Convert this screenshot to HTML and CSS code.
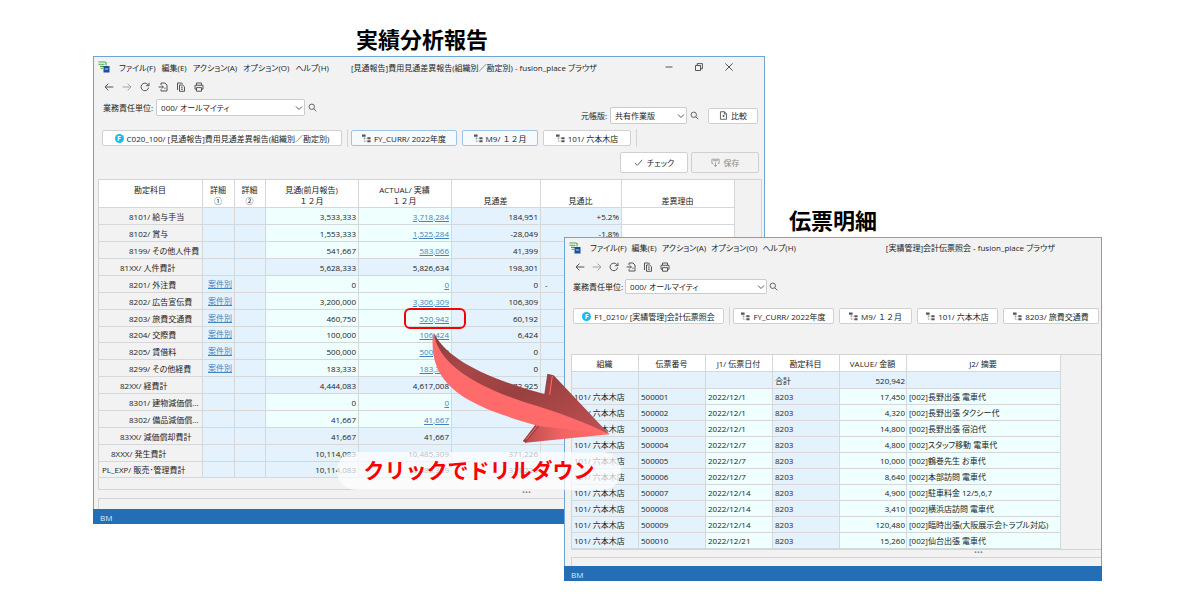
FILE: index.html
```html
<!DOCTYPE html>
<html lang="ja">
<head>
<meta charset="utf-8">
<title>fusion_place ドリルダウン</title>
<link rel="stylesheet" href="styles.css">
</head>
<body>
<svg class="defs" aria-hidden="true">
  <symbol id="i-app" viewBox="0 0 12 12"><path d="M1 1h7v6H1z" fill="#fff"/><path d="M.5 1h7M.5 3.2h6M2 5.4h4M8 1v3.5M2.5 7.3H5" stroke="#43a547" stroke-width="1.1" fill="none"/><path d="M5.5 5h6v6.5h-6z" fill="#1d4f9c"/><path d="M6.8 8h3.4" stroke="#9ec3f0" stroke-width="1.2"/></symbol>
  <symbol id="i-back" viewBox="0 0 10 10"><path d="M9.3 5H1M4.4 1.6 1 5l3.4 3.4"/></symbol>
  <symbol id="i-next" viewBox="0 0 10 10"><path d="M.7 5H9M5.6 1.6 9 5 5.6 8.4"/></symbol>
  <symbol id="i-reload" viewBox="0 0 10 10"><path d="M8.6 5.6A3.8 3.8 0 1 1 7.7 2.4L8.8 3.5M9 .8v2.9H6.1"/></symbol>
  <symbol id="i-import" viewBox="0 0 10 10"><path d="M3 3V1h4l2 2v6H3V7.3M.5 5h4.8M3.8 3.4 5.4 5 3.8 6.6M6.3 6.2h1.3"/></symbol>
  <symbol id="i-copy" viewBox="0 0 10 10"><path d="M1.5 8V1h4.2l1 1M3.5 3h3.2l1.8 1.8V9.3h-5zM5 5.2h1.8M5 7.2h2"/></symbol>
  <symbol id="i-print" viewBox="0 0 10 10"><path d="M2.5 3.2V1h5v2.2M2.5 7.2H1V3.3h8v3.9H7.5M2.5 5.6h5v3.6h-5z"/></symbol>
  <symbol id="i-search" viewBox="0 0 10 10"><path d="M7.2 4.2a3 3 0 1 1-6 0 3 3 0 0 1 6 0zM6.4 6.4 9.2 9.2"/></symbol>
  <symbol id="i-down" viewBox="0 0 8 8"><path d="M1 2.5 4 5.5l3-3"/></symbol>
  <symbol id="i-tree" viewBox="0 0 10 10"><path d="M0 .5h4V3H0zM6 3.6h3.5v2.2H6zM6 7h3.5v2.3H6z" fill="#555" stroke="none"/><path d="M2.5 3v5H6M2.5 4.7H6" stroke="#888" stroke-dasharray="1 .6"/></symbol>
  <symbol id="i-doc" viewBox="0 0 10 10"><path d="M1.6.8h4.6l2.2 2.3v6.1H1.6zM3.8 5.5h2.4M5 4.3v2.4M6 1v2.4h2.2"/></symbol>
  <symbol id="i-check" viewBox="0 0 10 10"><path d="M1 5.6 3.7 8.2 9.2 2"/></symbol>
  <symbol id="i-save" viewBox="0 0 10 10"><path d="M2.4 6H1V1.4h8V6H7.6M2.5 3h5M5 9.4V4.8M3.2 7.6 5 9.4l1.8-1.8" /></symbol>
</svg>

<main class="stage">
  <h2 class="caption caption-report">実績分析報告</h2>
  <h2 class="caption caption-slip">伝票明細</h2>

  <section class="window report" aria-label="実績分析報告">
    <header class="titlebar">
      <svg class="app-icon"><use href="#i-app"/></svg>
      <nav class="menu"><button>ファイル(F)</button><button>編集(E)</button><button>アクション(A)</button><button>オプション(O)</button><button>ヘルプ(H)</button></nav>
      <span class="title">[見通報告]費用見通差異報告(組織別／勘定別) - fusion_place ブラウザ</span>
      <div class="controls">
        <button aria-label="最小化"><svg viewBox="0 0 10 10"><path d="M1.5 5h7"/></svg></button>
        <button aria-label="元に戻す"><svg viewBox="0 0 10 10"><path d="M1.5 3.5h5v5h-5zM3.2 3V1.6h5.2v5.2H7"/></svg></button>
        <button aria-label="閉じる"><svg viewBox="0 0 10 10"><path d="M1.4 1.4l7.2 7.2M8.6 1.4 1.4 8.6"/></svg></button>
      </div>
    </header>
    <div class="toolbar">
      <button aria-label="戻る"><svg><use href="#i-back"/></svg></button>
      <button aria-label="進む" class="dim"><svg><use href="#i-next"/></svg></button>
      <button aria-label="更新"><svg><use href="#i-reload"/></svg></button>
      <button aria-label="取込"><svg><use href="#i-import"/></svg></button>
      <button aria-label="複写"><svg><use href="#i-copy"/></svg></button>
      <button aria-label="印刷"><svg><use href="#i-print"/></svg></button>
    </div>
    <div class="filters">
      <div class="field">
        <label for="unit1">業務責任単位:</label>
        <span class="select unit"><select id="unit1"><option>000/ オールマイティ</option></select><svg><use href="#i-down"/></svg></span>
        <button class="search" aria-label="検索"><svg><use href="#i-search"/></svg></button>
      </div>
      <div class="field ledger">
        <label for="ledger">元帳版:</label>
        <span class="select"><select id="ledger"><option>共有作業版</option></select><svg><use href="#i-down"/></svg></span>
        <button class="search" aria-label="検索"><svg><use href="#i-search"/></svg></button>
        <button class="btn compare"><svg><use href="#i-doc"/></svg>比較</button>
      </div>
    </div>
    <div class="chips">
      <button class="btn form"><i class="badge">F</i>C020_100/ [見通報告]費用見通差異報告(組織別／勘定別)</button>
      <span class="sep"></span>
      <button class="btn active year"><svg><use href="#i-tree"/></svg>FY_CURR/ 2022年度</button>
      <button class="btn active month"><svg><use href="#i-tree"/></svg>M9/ １２月</button>
      <button class="btn store"><svg><use href="#i-tree"/></svg>101/ 六本木店</button>
      <span class="sep"></span>
    </div>
    <div class="actions">
      <button class="btn"><svg><use href="#i-check"/></svg>チェック</button>
      <button class="btn" disabled><svg><use href="#i-save"/></svg>保存</button>
    </div>
    <div class="sheet">
      <table>
        <colgroup><col class="c-account"><col class="c-d1"><col class="c-d2"><col class="c-plan"><col class="c-plan"><col class="c-diff"><col class="c-ratio"><col class="c-reason"></colgroup>
        <thead><tr><th class="top">勘定科目</th><th>詳細<br>①</th><th>詳細<br>②</th><th>見通(前月報告)<br>１２月</th><th>ACTUAL/ 実績<br>１２月</th><th>見通差</th><th>見通比</th><th>差異理由</th></tr></thead>
        <tbody>
          <tr><th class="l3">8101/ 給与手当</th><td></td><td></td><td class="in">3,533,333</td><td class="in"><a href="#">3,718,284</a></td><td>184,951</td><td>+5.2%</td><td class="note"></td></tr>
          <tr><th class="l3">8102/ 賞与</th><td></td><td></td><td class="in">1,553,333</td><td class="in"><a href="#">1,525,284</a></td><td>-28,049</td><td>-1.8%</td><td class="note"></td></tr>
          <tr><th class="l3">8199/ その他人件費</th><td></td><td></td><td class="in">541,667</td><td class="in"><a href="#">583,066</a></td><td>41,399</td><td></td><td class="note"></td></tr>
          <tr><th class="l2">81XX/ 人件費計</th><td></td><td></td><td>5,628,333</td><td>5,826,634</td><td>198,301</td><td></td><td class="note"></td></tr>
          <tr><th class="l3">8201/ 外注費</th><td class="detail"><a href="#">案件別</a></td><td></td><td class="in">0</td><td class="in"><a href="#">0</a></td><td>0</td><td class="none">-</td><td class="note"></td></tr>
          <tr><th class="l3">8202/ 広告宣伝費</th><td class="detail"><a href="#">案件別</a></td><td></td><td class="in">3,200,000</td><td class="in"><a href="#">3,306,309</a></td><td>106,309</td><td></td><td class="note"></td></tr>
          <tr><th class="l3">8203/ 旅費交通費</th><td class="detail"><a href="#">案件別</a></td><td></td><td class="in">460,750</td><td class="in"><a href="#">520,942</a></td><td>60,192</td><td></td><td class="note"></td></tr>
          <tr><th class="l3">8204/ 交際費</th><td class="detail"><a href="#">案件別</a></td><td></td><td class="in">100,000</td><td class="in"><a href="#">106,424</a></td><td>6,424</td><td></td><td class="note"></td></tr>
          <tr><th class="l3">8205/ 賃借料</th><td class="detail"><a href="#">案件別</a></td><td></td><td class="in">500,000</td><td class="in"><a href="#">500,000</a></td><td>0</td><td></td><td class="note"></td></tr>
          <tr><th class="l3">8299/ その他経費</th><td class="detail"><a href="#">案件別</a></td><td></td><td class="in">183,333</td><td class="in"><a href="#">183,333</a></td><td>0</td><td></td><td class="note"></td></tr>
          <tr><th class="l2">82XX/ 経費計</th><td></td><td></td><td>4,444,083</td><td>4,617,008</td><td>172,925</td><td></td><td class="note"></td></tr>
          <tr><th class="l3">8301/ 建物減価償...</th><td></td><td></td><td class="in">0</td><td class="in"><a href="#">0</a></td><td></td><td></td><td class="note"></td></tr>
          <tr><th class="l3">8302/ 備品減価償...</th><td></td><td></td><td class="in">41,667</td><td class="in"><a href="#">41,667</a></td><td></td><td></td><td class="note"></td></tr>
          <tr><th class="l2">83XX/ 減価償却費計</th><td></td><td></td><td>41,667</td><td>41,667</td><td></td><td></td><td class="note"></td></tr>
          <tr><th class="l1">8XXX/ 発生費計</th><td></td><td></td><td>10,114,083</td><td>10,485,309</td><td>371,226</td><td></td><td class="note"></td></tr>
          <tr><th>PL_EXP/ 販売･管理費計</th><td></td><td></td><td>10,114,083</td><td>10,485,309</td><td>371,226</td><td></td><td class="note"></td></tr>
        </tbody>
      </table>
    </div>
    <div class="splitter">•••</div>
    <div class="pane"></div>
    <footer class="status">BM</footer>
  </section>

  <section class="window slip" aria-label="伝票明細">
    <header class="titlebar">
      <svg class="app-icon"><use href="#i-app"/></svg>
      <nav class="menu"><button>ファイル(F)</button><button>編集(E)</button><button>アクション(A)</button><button>オプション(O)</button><button>ヘルプ(H)</button></nav>
      <span class="title">[実績管理]会計伝票照会 - fusion_place ブラウザ</span>
    </header>
    <div class="toolbar">
      <button aria-label="戻る"><svg><use href="#i-back"/></svg></button>
      <button aria-label="進む" class="dim"><svg><use href="#i-next"/></svg></button>
      <button aria-label="更新"><svg><use href="#i-reload"/></svg></button>
      <button aria-label="取込"><svg><use href="#i-import"/></svg></button>
      <button aria-label="複写"><svg><use href="#i-copy"/></svg></button>
      <button aria-label="印刷"><svg><use href="#i-print"/></svg></button>
    </div>
    <div class="filters">
      <div class="field">
        <label for="unit2">業務責任単位:</label>
        <span class="select unit"><select id="unit2"><option>000/ オールマイティ</option></select><svg><use href="#i-down"/></svg></span>
        <button class="search" aria-label="検索"><svg><use href="#i-search"/></svg></button>
      </div>
    </div>
    <div class="chips">
      <button class="btn form"><i class="badge">F</i>F1_0210/ [実績管理]会計伝票照会</button>
      <span class="sep"></span>
      <button class="btn year"><svg><use href="#i-tree"/></svg>FY_CURR/ 2022年度</button>
      <button class="btn month"><svg><use href="#i-tree"/></svg>M9/ １２月</button>
      <button class="btn store"><svg><use href="#i-tree"/></svg>101/ 六本木店</button>
      <button class="btn account"><svg><use href="#i-tree"/></svg>8203/ 旅費交通費</button>
    </div>
    <div class="sheet">
      <table>
        <colgroup><col class="c-slip"><col class="c-slip"><col class="c-slip"><col class="c-slip"><col class="c-slip"><col class="c-memo"></colgroup>
        <thead><tr><th>組織</th><th>伝票番号</th><th>J1/ 伝票日付</th><th>勘定科目</th><th>VALUE/ 金額</th><th>J2/ 摘要</th></tr></thead>
        <tbody>
          <tr class="total"><td></td><td></td><td></td><td>合計</td><td class="num">520,942</td><td></td></tr>
          <tr><td>101/ 六本木店</td><td>500001</td><td class="in">2022/12/1</td><td>8203</td><td class="in num">17,450</td><td class="in">[002]長野出張 電車代</td></tr>
          <tr><td>101/ 六本木店</td><td>500002</td><td class="in">2022/12/1</td><td>8203</td><td class="in num">4,320</td><td class="in">[002]長野出張 タクシー代</td></tr>
          <tr><td>101/ 六本木店</td><td>500003</td><td class="in">2022/12/1</td><td>8203</td><td class="in num">14,800</td><td class="in">[002]長野出張 宿泊代</td></tr>
          <tr><td>101/ 六本木店</td><td>500004</td><td class="in">2022/12/7</td><td>8203</td><td class="in num">4,800</td><td class="in">[002]スタッフ移動 電車代</td></tr>
          <tr><td>101/ 六本木店</td><td>500005</td><td class="in">2022/12/7</td><td>8203</td><td class="in num">10,000</td><td class="in">[002]鶴巻先生 お車代</td></tr>
          <tr><td>101/ 六本木店</td><td>500006</td><td class="in">2022/12/7</td><td>8203</td><td class="in num">8,640</td><td class="in">[002]本部訪問 電車代</td></tr>
          <tr><td>101/ 六本木店</td><td>500007</td><td class="in">2022/12/14</td><td>8203</td><td class="in num">4,900</td><td class="in">[002]駐車料金 12/5,6,7</td></tr>
          <tr><td>101/ 六本木店</td><td>500008</td><td class="in">2022/12/14</td><td>8203</td><td class="in num">3,410</td><td class="in">[002]横浜店訪問 電車代</td></tr>
          <tr><td>101/ 六本木店</td><td>500009</td><td class="in">2022/12/14</td><td>8203</td><td class="in num">120,480</td><td class="in">[002]臨時出張(大阪展示会トラブル対応)</td></tr>
          <tr><td>101/ 六本木店</td><td>500010</td><td class="in">2022/12/21</td><td>8203</td><td class="in num">15,260</td><td class="in">[002]仙台出張 電車代</td></tr>
        </tbody>
      </table>
    </div>
    <div class="splitter">•••</div>
    <div class="pane"></div>
    <footer class="status">BM</footer>
  </section>

  <div class="highlight"></div>
  <svg class="arrow" viewBox="0 0 585 375" aria-hidden="true">
    <defs>
      <linearGradient id="shade" x1="0" y1="0" x2="1" y2="1"><stop offset="0" stop-color="#8f3a3a"/><stop offset=".25" stop-color="#a84747"/><stop offset=".55" stop-color="#9a4040"/><stop offset="1" stop-color="#c25252"/></linearGradient>
      <linearGradient id="head" x1="0" y1="0" x2="1" y2="0"><stop offset="0" stop-color="#b84d4d"/><stop offset=".45" stop-color="#f06464"/><stop offset="1" stop-color="#ff6b6b"/></linearGradient>
    </defs>
    <path d="M294 348 338 300 365 296 553 328 302 353z" fill="url(#head)"/>
    <path d="M294 348 331 299 343 303 302 353z" fill="#9a4141"/>
    <path d="M303 344 337 302" stroke="#ff7474" stroke-width="3"/>
    <path d="M27 24C60 90 150 150 358 207L367 146 386 151 553 328 300 260C120 200 30 130 27 24z" fill="url(#shade)"/>
    <path d="M26 24C40 110 130 175 300 232 400 262 480 292 553 328L340 303C260 280 190 258 130 224 60 184 18 130 23 40z" fill="#ff6b6b"/>
    <path d="M382 152 374 209" stroke="#ff7070" stroke-width="3"/>
  </svg>
  <p class="callout">クリックでドリルダウン</p>
</main>
</body>
</html>
```
FILE: styles.css
```css
* { box-sizing: border-box; }

body {
  margin: 0;
  background: #fff;
  color: #222;
  font: 8px/11px "Open Sans", "Noto Sans CJK JP", sans-serif;
}

button, select {
  margin: 0;
  padding: 0;
  border: 0;
  background: none;
  color: inherit;
  font: inherit;
  white-space: nowrap;
}

svg { fill: none; stroke: #555; stroke-width: 1; }
.defs { position: absolute; width: 0; height: 0; }

.stage {
  position: relative;
  max-width: 1200px;
  min-height: 600px;
  margin: 0 auto;
}

.caption {
  position: absolute;
  margin: 0;
  color: #000;
  font: 700 22px/32px "Noto Sans CJK JP", sans-serif;
}
.caption-report { left: 356px; top: 22px; }
.caption-slip { left: 789px; top: 203px; }

/* Windows */
.window {
  position: absolute;
  display: flex;
  flex-direction: column;
  border: 1px solid #6fa4d4;
  border-bottom: 0;
  background: #f2f2f2;
}
.report { left: 93px; top: 56px; width: 672px; }
.slip { left: 564px; top: 237px; width: 538px; }

.titlebar {
  display: flex;
  align-items: center;
  height: 20px;
  padding: 0 30px 0 4px;
  font-feature-settings: "palt";
}
.app-icon { width: 12px; height: 12px; stroke: none; margin-right: 9px; }
.menu { display: flex; gap: 6px; }
.title { margin-left: 22px; }
.controls { display: flex; gap: 20px; margin-left: auto; }
.controls svg { display: block; width: 10px; height: 10px; }

.toolbar {
  display: flex;
  align-items: center;
  gap: 8px;
  height: 20px;
  padding-left: 10px;
}
.toolbar svg { display: block; width: 10px; height: 10px; }
.toolbar .dim { opacity: 0.5; }

.filters {
  display: flex;
  justify-content: space-between;
  margin-top: 2px;
  padding: 0 6px 0 9px;
}
.field { display: flex; align-items: center; height: 17px; gap: 3px; }
.ledger { margin-top: 8px; }
.select { position: relative; display: flex; width: 77px; height: 17px; }
.select.unit { width: 149px; font-feature-settings: "palt"; }
.select select {
  width: 100%;
  padding: 0 4px;
  appearance: none;
  border: 1px solid #ccc;
  border-radius: 2px;
  background: #fff;
}
.select svg { position: absolute; right: 2px; top: 5px; width: 8px; height: 8px; pointer-events: none; }
.search svg { display: block; width: 9px; height: 9px; }

.btn {
  display: flex;
  align-items: center;
  justify-content: center;
  gap: 3px;
  height: 16px;
  border: 1px solid #d0d0d0;
  border-radius: 2px;
  background: #fff;
}
.btn svg { width: 9px; height: 9px; }
.btn.active { border-color: #9fc3e6; background: #f7fafd; }
.compare { width: 50px; margin-left: 6px; }

.chips {
  display: flex;
  align-items: center;
  gap: 5px;
  margin-top: 5px;
  padding-left: 8px;
}
.sep { width: 1px; height: 18px; margin-right: -2px; background: #d4d4d4; }
.form { width: 240px; }
.year { width: 106px; }
.month { width: 76px; }
.store { width: 88px; }
.account { width: 96px; }
.badge {
  width: 9px;
  height: 9px;
  border-radius: 50%;
  background: #12bdf0;
  color: #fff;
  font: 700 7px/9px "Open Sans", sans-serif;
  text-align: center;
}

.actions {
  display: flex;
  justify-content: flex-end;
  gap: 3px;
  margin-top: 5px;
  padding-right: 5px;
}
.actions .btn { width: 68px; height: 21px; gap: 4px; font-feature-settings: "palt"; }
.actions .btn:disabled { background: #f2f2f2; color: #888; }
.actions .btn:disabled svg { stroke: #999; }

/* Tables */
.sheet {
  margin: 6px 2px 0 4px;
  border: solid #d4d4d4;
  border-width: 1px 1px 0 1px;
}
table { table-layout: fixed; border-collapse: separate; border-spacing: 0; }
.report table { width: 636px; }
.slip table { width: 489px; }
.report tbody tr { height: 17px; }
.report tbody tr:nth-child(8n) { height: 16px; }
.slip tr { height: 16px; }
.slip thead tr, .slip .total { height: 17px; }
th, td {
  padding: 0 2px 0 1px;
  border: solid #d4d8da;
  border-width: 0 1px 1px 0;
  font-weight: 400;
  line-height: 11px;
  white-space: nowrap;
}
thead th { background: #fff; text-align: center; }
.report thead th { height: 28px; padding-bottom: 1px; vertical-align: bottom; }
.report thead .top { padding-top: 4px; vertical-align: top; }
tbody th { padding-left: 3px; background: #f2f2f2; text-align: left; font-feature-settings: "palt"; }
tbody .l1 { padding-left: 12px; }
tbody .l2 { padding-left: 21px; }
tbody .l3 { padding-left: 30px; }
td { background: #e4f2fe; text-align: right; }
td.in { background: #eefffe; }
td.note { background: #fff; }
td.none { padding-left: 4px; text-align: left; }
td.detail { padding-bottom: 2px; }
td a { color: #3f83c0; }
.slip td { padding-left: 2px; text-align: left; font-feature-settings: "palt"; }
.slip td.num { padding-right: 1px; text-align: right; }

.c-account { width: 104px; }
.c-d1 { width: 32px; }
.c-d2 { width: 31px; }
.c-plan { width: 93px; }
.c-diff { width: 89px; }
.c-ratio { width: 81px; }
.c-reason { width: 113px; }
.c-slip { width: 67px; }
.c-memo { width: 154px; }

.splitter {
  height: 12px;
  margin: 0 2px 0 4px;
  padding-left: 423px;
  border: solid #d4d4d4;
  border-width: 0 1px 1px;
  color: #888;
  font-size: 8px;
  line-height: 28px;
}
.pane {
  height: 11px;
  margin: 8px 2px 0 4px;
  border: solid #d4d4d4;
  border-width: 1px 1px 0;
}
.status {
  height: 15px;
  margin: 0 -1px;
  padding: 3px 7px 0;
  background: #236eb4;
  color: #dcebf8;
}

/* Second window */
.slip .titlebar { height: 19px; padding-right: 46px; }
.slip .menu { gap: 5px; }
.slip .title { margin-left: auto; }
.slip .toolbar { height: 19px; gap: 7px; }
.slip .filters { margin-top: 3px; padding-left: 8px; }
.slip .field, .slip .select { height: 15px; }
.slip .field { gap: 2px; }
.slip .unit { width: 142px; }
.slip .select svg { top: 4px; }
.slip .chips { margin-top: 13px; }
.slip .form { width: 151px; }
.slip .year { width: 101px; }
.slip .month { width: 73px; }
.slip .store { width: 81px; }
.slip .sheet { margin: 29px 0 0 6px; border-right: 0; }
.slip .splitter { height: 1px; margin: 0 0 0 6px; padding-left: 403px; line-height: 4px; border-width: 1px 0 0; }
.slip .pane { height: 9px; margin: 7px 0 0 6px; border-right: 0; }

/* Annotations over the windows */
.highlight {
  position: absolute;
  left: 404px;
  top: 308px;
  width: 62px;
  height: 21px;
  border: 2px solid #f80000;
  border-radius: 6px;
}
.arrow { position: absolute; left: 425px; top: 325px; width: 195px; height: 125px; stroke: none; }
.callout {
  position: absolute;
  left: 337px;
  top: 452px;
  width: 284px;
  margin: 0;
  padding-bottom: 4px;
  border-radius: 19px;
  background: rgba(255, 255, 255, 0.7);
  color: #fb0000;
  font: 700 21px/34px "Noto Sans CJK JP", sans-serif;
  text-align: center;
}
```
